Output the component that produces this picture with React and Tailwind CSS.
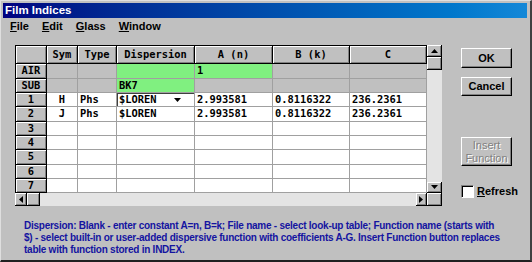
import React from "react";

// ------------------------------------------
// FILM INDICES DIALOG
// ------------------------------------------

const cols = [
  { key: "sym", w: "w-[31px]", label: "Sym", align: "justify-center" },
  { key: "type", w: "w-[39px]", label: "Type", align: "justify-start pl-[2px]" },
  { key: "disp", w: "w-[78px]", label: "Dispersion", align: "justify-start pl-[2px]" },
  { key: "a", w: "w-[78px]", label: "A (n)", align: "justify-start pl-[2px]" },
  { key: "b", w: "w-[77px]", label: "B (k)", align: "justify-start pl-[2px]" },
  { key: "c", w: "w-[77px]", label: "C", align: "justify-start pl-[2px]" }
];

const rows = [
  { id: "AIR", h: "h-[15px]", gray: true, green: ["disp", "a"], a: "1" },
  { id: "SUB", h: "h-[14px]", gray: true, green: ["disp"], disp: "BK7" },
  {
    id: "1", h: "h-[14px]", sym: "H", type: "Phs", disp: "$LOREN", combo: true,
    a: "2.993581", b: "0.8116322", c: "236.2361"
  },
  {
    id: "2", h: "h-[15px]", sym: "J", type: "Phs", disp: "$LOREN",
    a: "2.993581", b: "0.8116322", c: "236.2361"
  },
  { id: "3", h: "h-[14px]" },
  { id: "4", h: "h-[14px]" },
  { id: "5", h: "h-[15px]" },
  { id: "6", h: "h-[14px]" },
  { id: "7", h: "h-[14px]" }
];

const bevel =
  "bg-[#c0c0c0] shadow-[inset_1px_1px_0_#fff,inset_-1px_-1px_0_#808080]";

function Arrow({ dir }) {
  const pts = {
    up: "0,4 3.5,0 7,4",
    down: "0,0 3.5,4 7,0",
    left: "4,0 0,3.5 4,7",
    right: "0,0 4,3.5 0,7"
  }[dir];
  const vert = dir === "up" || dir === "down";
  return (
    <svg width={vert ? 7 : 4} height={vert ? 4 : 7} viewBox={vert ? "0 0 7 4" : "0 0 4 7"}>
      <polygon points={pts} fill="#000" />
    </svg>
  );
}

function ScrollBtn({ dir, className }) {
  return (
    <div
      className={`flex items-center justify-center border-r border-b border-black ${bevel} ${className}`}
    >
      <Arrow dir={dir} />
    </div>
  );
}

function Button({ children, disabled, className }) {
  return (
    <div
      className={`w-[51px] flex flex-col items-center justify-center border-t border-l border-t-white border-l-white border-r border-b border-r-black border-b-black bg-[#c0c0c0] shadow-[inset_-1px_-1px_0_#808080] text-[11px] leading-[13px] ${
        disabled
          ? "text-[#808080] [text-shadow:1px_1px_0_#fff]"
          : "text-black font-bold"
      } ${className}`}
    >
      {children}
    </div>
  );
}

export default function App() {
  return (
    <div className="w-[532px] h-[262px] overflow-hidden bg-[#c0c0c0] border-l border-t border-l-[#dfdfdf] border-t-[#dfdfdf] border-r-2 border-b-2 border-r-[#404040] border-b-[#202020] pl-[2px] pt-[2px] pr-[3px] flex flex-col [font-family:Liberation_Sans,Arial,sans-serif]">

      {/* TITLE */}
      <div className="h-[15px] bg-linear-to-r from-[#000080] to-[#1488d8] flex items-center pl-[2px]">
        <span className="text-white font-bold text-[11.5px] leading-none">
          Film Indices
        </span>
      </div>

      {/* MENU */}
      <div className="h-[17px] flex items-center pl-[7px] gap-[13px] text-[11px] font-bold text-black">
        <span><u className="underline-offset-1">F</u>ile</span>
        <span><u className="underline-offset-1">E</u>dit</span>
        <span><u className="underline-offset-1">G</u>lass</span>
        <span><u className="underline-offset-1">W</u>indow</span>
      </div>

      {/* CONTENT */}
      <div className="flex mt-[10px] ml-[12px]">

        {/* GRID */}
        <div className="flex">
          <div className="flex flex-col">
            <div className="flex flex-col border-l border-t border-black [font-family:DejaVu_Sans_Mono,monospace] font-bold text-[10.4px] text-black">

              {/* HEADER */}
              <div className="flex h-[18px]">
                <div className={`w-[31px] border-r border-b border-black ${bevel}`} />
                {cols.map((c) => (
                  <div
                    key={c.key}
                    className={`${c.w} flex items-center justify-center border-r border-b border-black ${bevel}`}
                  >
                    {c.label}
                  </div>
                ))}
              </div>

              {/* ROWS */}
              {rows.map((r) => (
                <div key={r.id} className={`flex ${r.h}`}>
                  <div
                    className={`w-[31px] flex items-center justify-center border-r border-b border-black ${bevel}`}
                  >
                    {r.id}
                  </div>
                  {cols.map((c) => {
                    const green = r.green && r.green.includes(c.key);
                    const bg = green
                      ? "bg-[#80f080]"
                      : r.gray
                      ? "bg-[#c0c0c0]"
                      : "bg-white";
                    if (r.combo && c.key === "disp") {
                      return (
                        <div
                          key={c.key}
                          className={`${c.w} relative flex items-center pl-[2px] border-r border-b border-[#a0a0a0] bg-white shadow-[inset_1px_1px_0_#404040]`}
                        >
                          {r[c.key]}
                          <span className="absolute left-[57px] top-[5px] flex">
                            <Arrow dir="down" />
                          </span>
                        </div>
                      );
                    }
                    return (
                      <div
                        key={c.key}
                        className={`${c.w} flex items-center ${c.align} border-r border-b border-[#a0a0a0] ${bg}`}
                      >
                        {r[c.key] || ""}
                      </div>
                    );
                  })}
                </div>
              ))}
            </div>

            {/* H SCROLL */}
            <div className="h-[13px] w-[412px] flex bg-[#e4e4e4]">
              <ScrollBtn dir="left" className="w-[12px]" />
              <div className={`w-[13px] border-r border-b border-black ${bevel}`} />
              <div className="flex-1" />
              <ScrollBtn dir="right" className="w-[11px]" />
            </div>
          </div>

          {/* V SCROLL */}
          <div className="flex flex-col w-[15px]">
            <div className="flex flex-col h-[148px] bg-[#e4e4e4]">
              <ScrollBtn dir="up" className="h-[12px]" />
              <div className={`h-[13px] border-r border-b border-black ${bevel}`} />
              <div className="flex-1" />
              <ScrollBtn dir="down" className="h-[11px]" />
            </div>
            <div className={`h-[13px] border-r border-b border-black ${bevel}`} />
          </div>
        </div>

        {/* BUTTONS */}
        <div className="flex flex-col ml-[19px] mt-[3px]">
          <Button className="h-[20px]">OK</Button>
          <Button className="h-[19px] mt-[9px]">Cancel</Button>
          <Button disabled className="h-[29px] mt-[41px]">
            <span>Insert</span>
            <span>Function</span>
          </Button>
          <div className="flex items-center mt-[17px] gap-[3px]">
            <div className="w-[13px] h-[13px] bg-white border-t border-l border-t-[#808080] border-l-[#808080] border-r border-b border-r-white border-b-white shadow-[inset_1px_1px_0_#000]" />
            <span className="text-[11px] font-bold text-black">
              <u className="underline-offset-1">R</u>efresh
            </span>
          </div>
        </div>
      </div>

      {/* HELP */}
      <div className="ml-[21px] mt-[14px] text-[10px] leading-[12px] tracking-[-0.25px] font-bold text-[#1414a0] whitespace-nowrap">
        <div>Dispersion: Blank - enter constant A=n, B=k; File name - select look-up table; Function name (starts with</div>
        <div>$) - select built-in or user-added dispersive function with coefficients A-G. Insert Function button replaces</div>
        <div>table with function stored in INDEX.</div>
      </div>
    </div>
  );
}
